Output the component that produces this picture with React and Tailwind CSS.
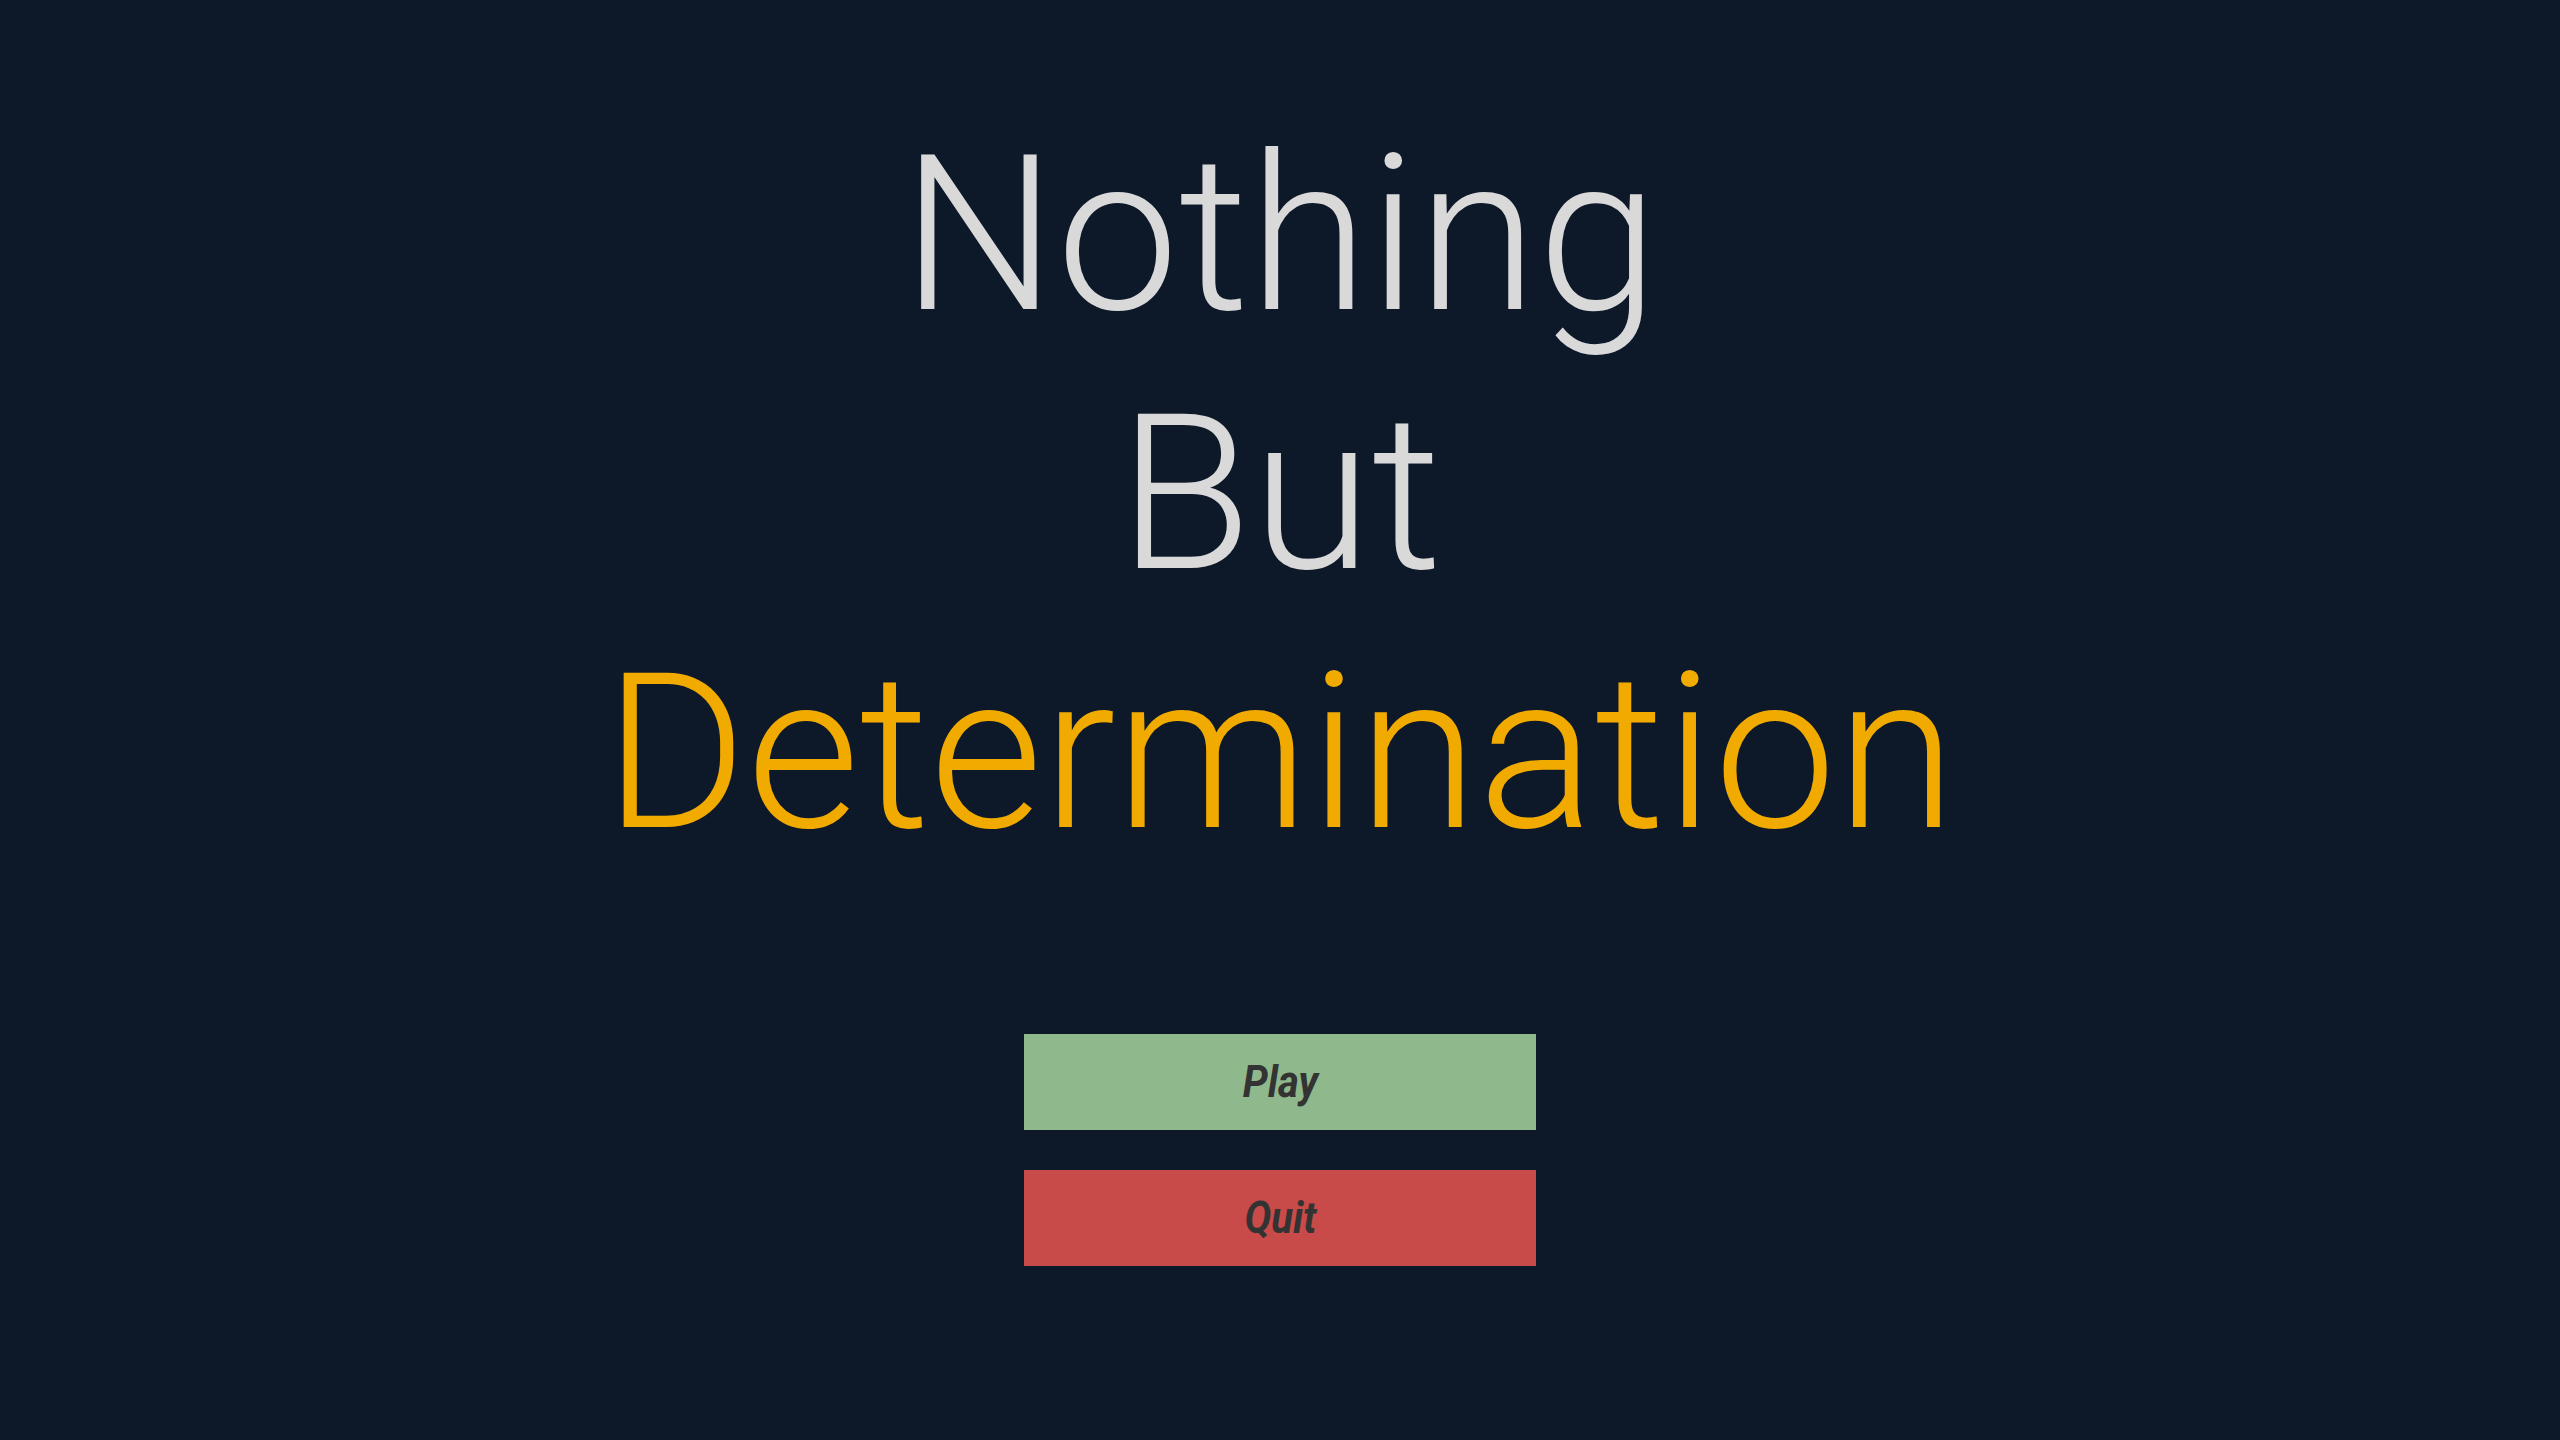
export default function App() {
  return (
    <div
      className="w-full h-[1440px] bg-[#0d1829] flex flex-col items-center pt-[105px]"
      style={{ fontFamily: "Roboto, 'Open Sans', sans-serif" }}
    >
      <h1 className="flex flex-col items-center text-[218px] leading-[259px] font-light text-[#d9d9d9]">
        <span>Nothing</span>
        <span>But</span>
        <span className="text-[#f0aa00]">Determination</span>
      </h1>
      <div className="flex flex-col gap-[40px] mt-[152px]">
        <button className="w-[512px] h-[96px] bg-[#8fb88c] text-[#333333] text-[45px] font-bold italic">
          <span className="inline-block scale-x-[0.89]">Play</span>
        </button>
        <button className="w-[512px] h-[96px] bg-[#c94b49] text-[#333333] text-[45px] font-bold italic">
          <span className="inline-block scale-x-[0.89]">Quit</span>
        </button>
      </div>
    </div>
  );
}
